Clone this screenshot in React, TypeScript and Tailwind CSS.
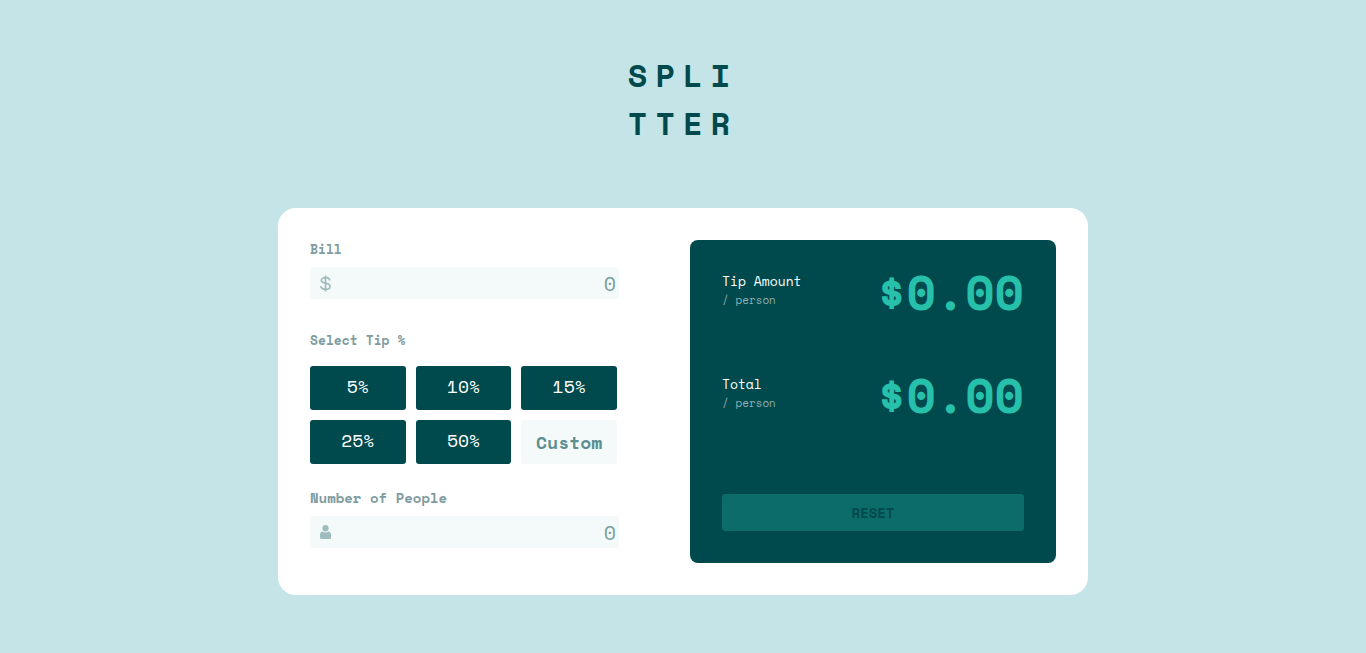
import { useState } from "react";

const TIPS = [5, 10, 15, 25, 50];

function DollarIcon() {
  return (
    <svg width="11" height="17" viewBox="0 0 11 17" fill="none" stroke="currentColor" strokeWidth="1.7" aria-hidden="true">
      <path d="M5.500 0.500V16.500" />
      <path d="M9.600 5.600C9.600 3.600 8 2.700 5.500 2.700S1.300 3.600 1.300 5.300C1.300 7.200 3 7.700 5.500 8.200S10 9.400 10 11.400S8.200 14.300 5.500 14.300S0.900 13.300 0.900 11" />
    </svg>
  );
}

function PersonIcon() {
  return (
    <svg width="11" height="14" viewBox="0 0 11 14" fill="currentColor" aria-hidden="true">
      <ellipse cx="5.5" cy="3.3" rx="3.1" ry="3.3" />
      <path d="M2.6 6.600C0.900 6.700 0 8.100 0 10v2.400C0 13.400 0.700 14 1.700 14h7.600c1 0 1.700-.6 1.700-1.600V10c0-1.900-.9-3.300-2.600-3.400C7.600 7.300 6.600 7.600 5.500 7.600S3.400 7.300 2.600 6.600Z" />
    </svg>
  );
}

type FieldProps = {
  id: string;
  value: string;
  onChange: (value: string) => void;
  icon: React.ReactNode;
};

function NumberField({ id, value, onChange, icon }: FieldProps) {
  return (
    <div className="flex h-8 items-center rounded-[3px] bg-[#f4fafa] pl-[10px] pr-[3px] text-[#9ebbbd]">
      <span className="shrink-0">{icon}</span>
      <input
        id={id}
        type="text"
        inputMode="decimal"
        placeholder="0"
        value={value}
        onChange={(e) => onChange(e.target.value)}
        className="h-8 w-full min-w-0 bg-transparent text-right text-[20px] text-[#00494d] outline-none placeholder:text-[#7a9fa1]"
      />
    </div>
  );
}

function ResultRow({ label, amount }: { label: string; amount: number }) {
  return (
    <div className="flex items-start justify-between">
      <div>
        <p className="text-[13px] leading-[18px] text-white">{label}</p>
        <p className="text-[11px] leading-5 text-[#8fb0b1]">/ person</p>
      </div>
      <output className="text-[48px] font-bold leading-10 text-[#26c0ab]">${amount.toFixed(2)}</output>
    </div>
  );
}

export default function App() {
  const [bill, setBill] = useState("");
  const [people, setPeople] = useState("");
  const [custom, setCustom] = useState("");
  const [tip, setTip] = useState(0);

  const count = Number(people) || 0;
  const total = Number(bill) || 0;
  const rate = Number(custom) || tip;
  const tipEach = count > 0 ? (total * rate) / 100 / count : 0;
  const totalEach = count > 0 ? total / count + tipEach : 0;

  const reset = () => {
    setBill("");
    setPeople("");
    setCustom("");
    setTip(0);
  };

  return (
    <div className="flex min-h-screen flex-col items-center bg-[#c5e4e7] pb-14 pt-[51px] font-['Space_Mono','DejaVu_Sans_Mono',monospace]">
      <h1 className="text-center text-[32px] font-bold leading-[48px] tracking-[8px] text-[#00494d]">
        SPLI
        <br />
        TTER
      </h1>

      <main className="mt-[61px] grid w-full max-w-[810px] grid-cols-[309fr_366fr] gap-[71px] rounded-[18px] bg-white p-8">
        <section className="pb-[15px]">
          <label htmlFor="bill" className="block text-[13px] font-bold leading-[18px] text-[#7f9c9f]">
            Bill
          </label>
          <div className="mt-[9px]">
            <NumberField id="bill" value={bill} onChange={setBill} icon={<DollarIcon />} />
          </div>

          <h2 className="mt-8 text-[13px] font-bold leading-[18px] text-[#7f9c9f]">Select Tip %</h2>
          <div className="mt-[17px] grid grid-cols-3 gap-[10px] pr-0.5">
            {TIPS.map((value) => (
              <button
                key={value}
                type="button"
                onClick={() => setTip(value)}
                className="h-11 rounded-[3px] bg-[#00494d] pb-1 text-[18px] text-white"
              >
                {value}%
              </button>
            ))}
            <input
              type="text"
              aria-label="Custom tip"
              placeholder="Custom"
              value={custom}
              onChange={(e) => setCustom(e.target.value)}
              className="h-11 w-full min-w-0 rounded-[3px] bg-[#f4fafa] text-center text-[18px] font-bold text-[#00494d] outline-none placeholder:text-[#5e8f90]"
            />
          </div>

          <label htmlFor="people" className="mt-[25px] block text-[14px] font-bold leading-[18px] text-[#7f9c9f]">
            Number of People
          </label>
          <div className="mt-[9px]">
            <NumberField id="people" value={people} onChange={setPeople} icon={<PersonIcon />} />
          </div>
        </section>

        <section className="flex flex-col rounded-lg bg-[#00494d] p-8">
          <ResultRow label="Tip Amount" amount={tipEach} />
          <div className="mt-[63px]">
            <ResultRow label="Total" amount={totalEach} />
          </div>
          <button
            type="button"
            onClick={reset}
            className="mt-auto h-[37px] w-full rounded-[3px] bg-[#0b6c69] text-[14px] font-bold text-[#00494d]"
          >
            RESET
          </button>
        </section>
      </main>
    </div>
  );
}
